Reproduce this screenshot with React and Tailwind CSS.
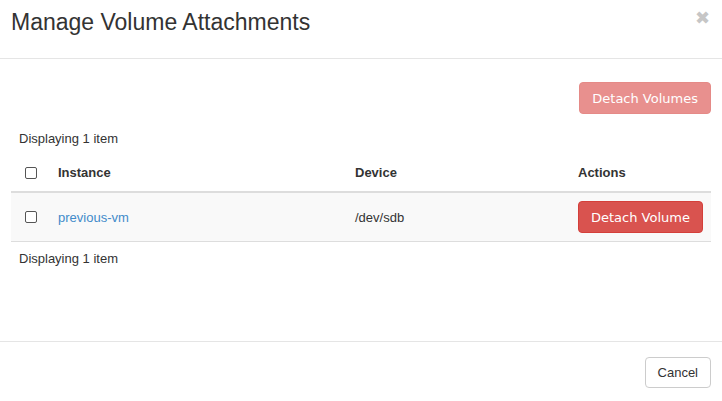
import React from 'react';

function Checkbox() {
    return (
        <span className="block w-[12px] h-[12px] border border-[#555] rounded-[2px] bg-white" />
    );
}

export default function App() {
    return (
        <div className="w-[722px] h-[401px] bg-white text-[#333] flex flex-col" style={{ fontFamily: '"Liberation Sans", Helvetica, Arial, sans-serif' }}>
            {/* header */}
            <div className="h-[59px] border-b border-[#e5e5e5] flex items-start justify-between pl-[11px] pr-[12px]">
                <h4 className="text-[23px] leading-[26px] mt-[9px] text-[#333]">Manage Volume Attachments</h4>
                <span className="text-[#c6c6c6] text-[18px] leading-[18px] font-bold mt-[9px]" style={{ fontFamily: '"DejaVu Sans", sans-serif' }}>✖</span>
            </div>

            {/* body */}
            <div className="flex-1 px-[11px] pt-[23px]">
                <div className="flex justify-end">
                    <button className="h-[32px] px-[12px] rounded-[4px] bg-[#e8908e] border border-[#e58a87] text-white text-[13px] pt-[1px]" style={{ fontFamily: '"DejaVu Sans", sans-serif' }}>
                        Detach Volumes
                    </button>
                </div>
                <div className="text-[13px] pl-[8px] mt-[16px] leading-[18px]">Displaying 1 item</div>
                <div className="mt-[5px] text-[13px]">
                    <div className="flex items-center h-[40px] border-b-2 border-[#ddd] font-bold pt-[2px]">
                        <div className="w-[47px] pl-[14px]"><Checkbox /></div>
                        <div className="w-[297px]">Instance</div>
                        <div className="w-[223px]">Device</div>
                        <div className="flex-1">Actions</div>
                    </div>
                    <div className="flex items-center h-[49px] bg-[#f9f9f9] border-b border-[#ddd]">
                        <div className="w-[47px] pl-[14px]"><Checkbox /></div>
                        <div className="w-[297px] text-[#428bca] pt-[1px]">previous-vm</div>
                        <div className="w-[223px] pt-[1px]">/dev/sdb</div>
                        <div className="flex-1">
                            <button className="h-[32px] px-[12px] rounded-[4px] bg-[#d9534f] border border-[#d43f3a] text-white text-[13px] pt-[1px]" style={{ fontFamily: '"DejaVu Sans", sans-serif' }}>
                                Detach Volume
                            </button>
                        </div>
                    </div>
                </div>
                <div className="text-[13px] pl-[8px] mt-[8px] leading-[18px]">Displaying 1 item</div>
            </div>

            {/* footer */}
            <div className="h-[60px] border-t border-[#e5e5e5] flex items-start justify-end px-[11px] pt-[15px]">
                <button className="h-[31px] px-[12px] rounded-[4px] bg-white border border-[#ccc] text-[13px] text-[#333]">
                    Cancel
                </button>
            </div>
        </div>
    );
}
